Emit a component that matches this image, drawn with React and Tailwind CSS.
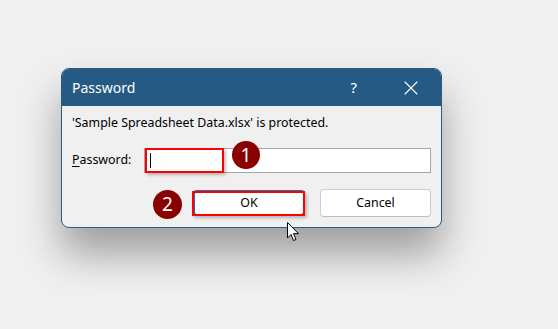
import { X } from 'lucide-react';

const font = { fontFamily: '"Noto Sans", "Open Sans", sans-serif' };

function Marker({ n, className }) {
  return (
    <div
      className={`absolute flex items-center justify-center rounded-full bg-[#8a0000] text-white text-[19px] leading-none ${className}`}
    >
      {n}
    </div>
  );
}

export default function App() {
  return (
    <div className="min-h-[329px] w-[558px] bg-[#f0f0f0] pt-[68px] pl-[61px]" style={font}>
      <div className="relative w-[381px] rounded-[8px] border border-[#2a5a80] bg-[#f0f0f0] shadow-[0_26px_40px_rgba(0,0,0,0.34)]">
        {/* Title bar */}
        <div className="flex h-[37px] items-center rounded-t-[7px] bg-[#245a83] pl-[10px] pr-[18px] text-white">
          <span className="text-[14px]">Password</span>
          <span className="ml-auto mr-[42px] text-[15px]">?</span>
          <X size={24} strokeWidth={1.1} />
        </div>

        {/* Body */}
        <div className="px-[10px] pb-[10px] pt-[8px] text-[12.4px] text-black">
          <div className="leading-[18px]">'Sample Spreadsheet Data.xlsx' is protected.</div>

          <div className="mt-[16px] flex items-center">
            <span className="w-[72px]">
              <span className="underline underline-offset-2">P</span>assword:
            </span>
            <div className="relative h-[25px] flex-1 border border-[#a6a6a6] bg-white">
              <div className="absolute left-[5px] top-[4px] h-[15px] w-px bg-black" />
            </div>
          </div>

          <div className="mt-[16px] flex items-start justify-end gap-[15px]">
            <button className="mt-px h-[26px] w-[112px] rounded-[4px] border-2 border-[#1f6ec2] bg-white text-[12.4px]">
              OK
            </button>
            <button className="h-[28px] w-[111px] rounded-[4px] border border-[#cdcdcd] border-b-[#aebfd6] bg-white text-[12.4px]">
              Cancel
            </button>
          </div>
        </div>

        {/* Annotations */}
        <div className="absolute left-[83px] top-[79px] h-[25px] w-[79px] border-2 border-[#ff0000] shadow-[2px_2px_3px_rgba(0,0,0,0.25)]" />
        <Marker n="1" className="left-[170px] top-[72px] h-[28px] w-[28px]" />
        <Marker n="2" className="left-[91px] top-[121px] h-[29px] w-[29px]" />
        <div className="absolute left-[130px] top-[122px] h-[25px] w-[113px] border-2 border-[#ff0000] shadow-[2px_2px_3px_rgba(0,0,0,0.25)]" />

        {/* Mouse pointer */}
        <svg className="absolute left-[225px] top-[153px]" width="13" height="20" viewBox="0 0 13 20">
          <path d="M0.5 0.5 L0.5 16 L4 12.5 L6.5 18.5 L9 17.5 L6.5 11.7 L11.5 11.7 Z" fill="white" stroke="black" strokeWidth="1" strokeLinejoin="round" />
        </svg>
      </div>
    </div>
  );
}
